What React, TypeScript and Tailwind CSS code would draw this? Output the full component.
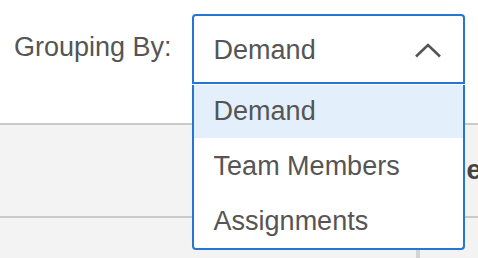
const options = ['Demand', 'Team Members', 'Assignments']

function Chevron() {
  return (
    <svg width="28" height="15" viewBox="0 0 28 15" fill="none">
      <polyline points="2,13.5 14,2 26,13.5" stroke="#555555" strokeWidth="2.6" />
    </svg>
  )
}

export default function App() {
  return (
    <div className="w-[478px] h-[258px] overflow-hidden bg-white flex flex-col font-['Liberation_Sans',Arial,sans-serif] text-[27px] leading-[31px] text-[#555555]">
      <div className="h-[123px] shrink-0 flex items-start">
        <div className="ml-[14px] mt-[32px]">Grouping By:</div>
        <div className="relative ml-[20px] mt-[14px] w-[273px] z-10">
          <div className="h-[70px] border-2 border-[#2377d3] rounded-t-[4px] bg-white flex items-center justify-between pl-[20px] pr-[21px] pt-[3px]">
            <span>Demand</span>
            <Chevron />
          </div>
          <ul className="absolute left-0 top-[71px] w-[273px] border-2 border-t-0 border-[#2377d3] rounded-b-[4px] bg-white">
            {options.map((o, i) => (
              <li
                key={o}
                className={
                  i === 0
                    ? 'h-[53px] pl-[20px] pt-[11px] bg-[#e3f0fc]'
                    : 'h-[55px] pl-[20px] pt-[13px]'
                }
              >
                {o}
              </li>
            ))}
          </ul>
        </div>
      </div>
      <div className="h-[2px] shrink-0 bg-[#cacaca]" />
      <div className="h-[91px] shrink-0 bg-[#f3f3f3] flex">
        <div className="w-[416px]" />
        <div className="w-[4px] bg-[#d4d4d4]" />
        <div className="flex-1 flex items-center pl-[3px] font-bold text-[#444444] whitespace-nowrap overflow-hidden">Role</div>
      </div>
      <div className="h-[2px] shrink-0 bg-[#cacaca]" />
      <div className="flex-1 bg-[#f3f3f3] flex">
        <div className="w-[416px]" />
        <div className="w-[4px] bg-[#d4d4d4]" />
        <div className="flex-1" />
      </div>
    </div>
  )
}
